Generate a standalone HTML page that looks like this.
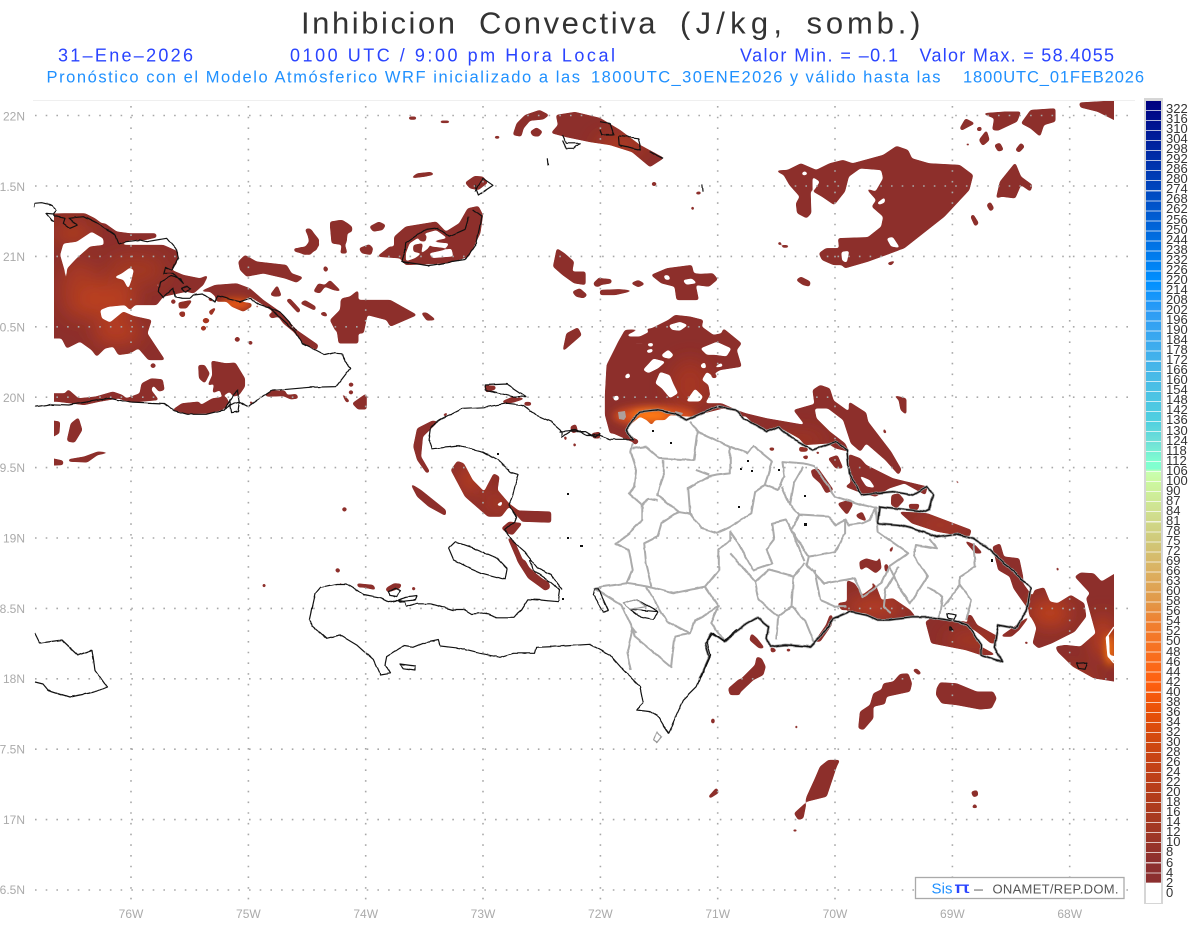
<!DOCTYPE html>
<html lang="es"><head><meta charset="utf-8"><title>Inhibicion Convectiva</title>
<style>
html,body{margin:0;padding:0;background:#fff;width:1200px;height:927px;overflow:hidden}
#w{position:relative;width:1200px;height:927px;overflow:hidden;font-family:"Liberation Sans",sans-serif}
svg{position:absolute;left:0;top:0}
#frame{position:absolute;left:1144px;top:98px;width:19px;height:806px;background:#d6d6d6}
#bar{position:absolute;left:1146px;top:101px;width:15px;height:782px;background:linear-gradient(to bottom,#000080 0%,#0090ff 23.1%,#2e9cf5 26.9%,#48b8e8 34.6%,#50d0e0 41%,#70e0d8 43.6%,#80ffd0 46.2%,#80ffd0 47%,#c8ffb0 47.4%,#ccf8a0 48.7%,#d0e090 52.6%,#d0c878 56.4%,#dcb060 60.3%,#e29848 64.1%,#f08030 66.7%,#f87020 70.5%,#ff6010 74.4%,#e85008 78.2%,#d04810 82%,#c04018 85.9%,#b03c1c 89.7%,#a03825 93.6%,#8c2f2f 97.4%,#8c2f2f 100%)}
#lines{position:absolute;left:1146px;top:101px;width:15px;height:782px;background:repeating-linear-gradient(to bottom,transparent 0,transparent 9px,rgba(255,255,255,.7) 9px,rgba(255,255,255,.7) 10.03px)}
#white{position:absolute;left:1146px;top:883px;width:15px;height:20px;background:#fff}
#labs{position:absolute;left:1166px;top:104px;font-size:13px;line-height:10.05px;color:#333;white-space:nowrap}
</style></head><body><div id="w">
<svg width="1200" height="927" viewBox="0 0 1200 927" xmlns="http://www.w3.org/2000/svg">
<defs>
<clipPath id="box"><rect x="54" y="101" width="1060" height="800"/></clipPath>
<filter id="b" x="-50%" y="-50%" width="200%" height="200%"><feGaussianBlur stdDeviation="9"/></filter>
<filter id="bs" x="-50%" y="-50%" width="200%" height="200%"><feGaussianBlur stdDeviation="4"/></filter>
<filter id="round" filterUnits="userSpaceOnUse" x="0" y="0" width="1200" height="927"><feGaussianBlur stdDeviation="1.3"/><feComponentTransfer><feFuncA type="linear" slope="8" intercept="-3.1"/></feComponentTransfer></filter>
<filter id="wig" filterUnits="userSpaceOnUse" x="0" y="0" width="1200" height="927" color-interpolation-filters="sRGB"><feTurbulence type="fractalNoise" baseFrequency=".09" numOctaves="2" seed="4" result="n"/><feDisplacementMap in="SourceGraphic" in2="n" scale="2.6" xChannelSelector="R" yChannelSelector="G"/><feGaussianBlur stdDeviation=".25"/></filter>
<mask id="m" maskUnits="userSpaceOnUse" x="0" y="0" width="1200" height="927">
<g clip-path="url(#box)">
<g fill="#fff" fill-rule="evenodd" filter="url(#round)">
<g transform="scale(.3827,.3333)">
<path d="M1068,350 1088,350 1088,359 1068,359Z M1150,362 1175,362 1175,369 1150,369Z M1340,405 1350,370 1372,345 1410,330 1435,345 1420,358 1385,362 1368,385 1362,410Z M1385,395 1402,382 1418,395 1408,410 1392,408Z M1292,408 1306,408 1306,416 1292,416Z M1072,535 1090,520 1125,516 1137,523 1110,530Z M1215,548 1240,528 1262,530 1275,548 1250,570 1228,565Z"/>
<path d="M800,685 815,690 835,735 810,765 770,755 768,745 795,745 808,725Z M862,665 895,660 920,680 920,695 895,705 905,760 890,760 895,715 868,710Z M938,745 965,733 975,745 970,765 945,760Z M965,680 990,665 1008,675 1000,690 975,695Z"/>
<path d="M985,770 1018,740 1030,740 1030,710 1060,680 1140,665 1165,695 1200,670 1222,625 1250,618 1262,645 1255,700 1225,770 1170,790 1060,795 1045,775Z M1060,760 1070,730 1110,700 1140,690 1170,715 1125,725 1120,745 1085,775 1060,785Z M1120,760 1180,745 1185,770 1130,775Z M1125,725 1175,730 1165,745 1125,740Z"/>
<path d="M1095,705 1115,705 1112,725 1095,722Z M1080,735 1105,730 1100,760 1080,755Z"/>
<path d="M1445,800 1455,745 1475,760 1500,785 1495,815 1530,815 1530,855 1500,850 1470,825Z M1495,875 1515,865 1535,885 1525,895 1505,890Z M1550,850 1568,830 1568,860 1555,860Z"/>
</g>
<path d="M556,115 575,112 600,118 620,130 640,145 664,158 650,167 632,152 610,145 590,142 566,137 551,133 558,125Z"/>
<g transform="translate(600,0) scale(.3827,.3333)">
<path d="M0,835 30,838 30,850 0,855Z M0,870 50,868 90,872 40,885 0,885Z M80,850 100,840 118,852 100,862Z"/>
<path d="M133,825 175,805 240,795 245,820 262,822 295,820 308,838 285,860 250,855 258,900 200,900 195,860 160,850Z M165,825 180,825 185,840 170,840Z M215,840 240,835 255,850 225,855Z"/>
<path d="M133,552 141,544 150,552 141,560Z M238,620 246,620 246,630 238,630Z M250,576 264,574 264,583 250,583Z M465,726 474,726 474,735 465,735Z M475,735 493,736 493,743 475,743Z"/>
<path d="M458,512 490,510 525,490 565,510 600,490 635,480 660,490 740,465 775,438 805,450 815,475 860,490 940,495 975,525 965,570 900,650 795,745 700,785 640,805 632,795 610,795 580,780 572,760 590,745 625,745 622,715 700,712 735,680 740,650 710,620 722,600 695,565 720,575 740,535 735,510 680,505 650,530 640,575 612,615 580,590 550,570 552,640 540,655 515,640 512,610 522,590 495,555 480,525Z M525,520 535,512 545,522 532,528Z M555,530 575,545 555,580Z M722,610 745,590 745,608 730,615Z M748,715 765,710 785,745 760,740Z M742,658 752,655 750,665Z M630,755 652,752 645,790 632,782Z"/>
<path d="M748,790 775,780 760,797Z M512,840 525,830 550,845 548,860 530,855Z M940,385 955,355 980,370 955,385 945,392Z M985,382 997,380 997,393 985,393Z M998,340 1060,335 1100,335 1090,365 1040,392 1025,390 1030,355Z M1100,370 1125,330 1190,325 1190,365 1160,375 1150,410 1125,385Z M990,420 1010,390 1018,420 1000,438Z M1030,435 1045,428 1055,450 1040,455Z M1085,450 1100,428 1110,440 1095,458Z M1252,308 1370,300 1370,375 1300,335 1255,322Z M1035,595 1045,545 1085,488 1100,530 1130,555 1125,575 1100,555 1085,595 1050,590Z M1010,615 1020,605 1030,625 1020,635Z M968,650 975,642 990,670 980,680Z M956,430 966,430 966,437 956,437Z"/>
</g>
<g transform="translate(30,190) scale(.3333)">
<path d="M39,72 100,70 165,70 195,85 215,100 225,100 260,125 300,130 378,130 380,142 345,150 300,150 270,165 300,165 400,165 445,185 440,220 425,240 460,255 510,265 535,255 520,285 490,310 470,305 445,310 400,320 380,345 315,345 300,360 285,345 235,350 210,360 215,385 240,398 280,365 310,378 365,390 352,430 375,465 405,510 355,510 325,475 300,490 265,495 250,470 225,475 200,500 185,480 150,455 110,475 95,445 39,445Z M90,195 100,160 140,155 185,125 220,145 222,165 180,170 140,205 112,235 108,290 103,240Z M250,262 275,250 300,232 312,240 305,270 295,298 280,270Z M370,195 383,195 383,200 370,200Z M380,280 388,280 386,292 380,290Z"/>
<path d="M430,326 439,335 430,344 421,335Z M450,340 488,330 470,355 445,355Z M455,365 468,378 455,382 445,370Z M535,365 558,350 545,378Z M520,406 529,415 520,424 511,415Z M525,383 534,392 525,401 516,392Z M535,320 552,330 545,335 535,330Z"/>
<path d="M490,310 520,300 555,285 620,280 660,295 700,330 750,365 800,420 865,465 860,480 825,465 790,425 760,400 745,380 725,385 715,375 730,365 700,345 660,320 640,330 610,335 555,318 540,305 510,305Z"/>
<path d="M555,320 590,320 630,335 665,340 665,350 640,365 605,350 590,335 560,335Z M675,345 690,348 680,355Z"/>
<path d="M625,215 645,195 680,215 770,225 785,250 820,262 800,278 765,265 700,250 650,260 630,240Z M720,315 742,285 755,318 735,320Z M768,330 780,325 812,360 805,370Z M810,340 825,330 858,350 855,362Z M868,370 885,365 895,380 880,378Z M622,439 631,448 622,457 613,448Z M660,451 667,458 660,465 653,458Z M885,226 896,237 887,248 879,237Z M850,305 865,280 885,285 900,270 935,305 910,300 885,290 870,310Z M790,180 810,172 830,170 840,150 825,118 840,115 868,150 860,180 825,195Z M900,105 925,90 955,100 950,155 945,165 952,190 930,190 940,165 905,160Z M900,390 930,360 935,325 960,320 985,300 985,460 925,460 930,430 915,420Z"/>
</g>
<g transform="translate(0,300) scale(.3827,.3333)">
<path d="M1020,0 1090,45 1105,110 1040,190 975,165 1010,155 955,100 925,100 885,130 880,90 862,60 890,55 890,0Z M1100,38 1115,38 1140,60 1115,62Z M950,100 960,45 1010,60 1020,80 1090,45 1105,110 1040,190 975,165 1010,155 955,100Z M550,30 565,25 550,48Z M465,8 500,0 490,15 470,25Z M470,35 485,35 480,50Z M620,109 629,118 620,127 611,118Z M655,122 662,128 655,136 648,128Z M532,76 541,84 532,93 523,84Z M540,53 549,62 540,71 531,62Z M400,188 409,197 400,206 391,197Z"/>
<path d="M115,280 170,280 178,268 205,295 250,290 295,275 320,285 330,295 365,280 370,250 395,235 425,238 430,270 415,275 400,255 395,270 415,300 340,308 310,295 260,305 220,315 150,305 115,305Z M518,195 535,195 548,220 535,250 520,235Z M552,182 590,190 615,188 640,235 640,260 625,285 610,290 600,275 580,290 575,270 555,280 560,250 542,258 555,225Z M450,330 475,310 520,305 525,315 555,295 590,290 600,310 580,330 545,340 490,342Z M650,300 665,310 655,315Z M690,285 710,272 745,272 750,285 775,282 780,295 760,298 740,288 700,290Z M115,358 157,365 155,400 115,425Z M175,420 185,370 205,352 215,390 195,428 178,425Z M115,470 165,482 165,495 115,497Z M178,478 220,470 255,455 293,457 255,465 228,487 180,485Z"/>
<path d="M917,246 926,254 917,262 909,254Z M917,269 925,277 917,285 909,277Z M888,272 915,305 905,308Z M920,310 945,290 958,280 958,328 935,328Z M900,620 908,628 900,637 892,628Z M883,804 890,812 883,820 876,812Z M690,849 696,857 690,864 684,857Z M1470,155 1480,100 1510,82 1520,105 1490,135Z M1080,440 1090,385 1130,362 1145,365 1105,410 1100,470 1123,515 1115,520 1090,480Z M1072,550 1100,570 1165,630 1165,648 1120,620 1090,590Z"/>
<path d="M1178,510 1195,483 1212,490 1235,540 1265,575 1290,520 1305,530 1300,570 1330,610 1355,632 1440,635 1440,668 1365,665 1345,640 1330,620 1310,650 1275,650 1215,590Z M1295,615 1315,600 1310,620Z M1310,685 1330,665 1365,670 1340,705 1325,700Z M1325,710 1345,725 1370,790 1405,825 1438,855 1425,872 1380,835 1355,790Z M1265,255 1295,258 1295,268 1270,278Z M1310,305 1340,290 1375,295 1340,308 1320,310Z M1370,306 1388,306 1388,317 1370,317Z M1155,345 1172,335 1165,350Z M1265,328 1272,328 1270,341Z M1472,408 1482,410 1478,427Z M1490,380 1505,372 1510,395 1495,400Z M1498,426 1508,435 1498,443Z M1545,400 1568,395 1568,415 1550,415Z M930,852 975,855 982,870 940,860Z M1012,862 1030,850 1050,852 1045,865 1020,875Z M1078,859 1087,866 1080,873Z"/>
</g>
<g transform="translate(300,560) scale(.3333)">
<path d="M170,70 220,75 228,90 205,82 175,82Z M256,88 265,79 274,90 265,98Z M282,72 305,72 295,82Z M340,79 349,86 340,93 334,86Z M104,30 113,23 121,30 113,39Z M118,63 127,72 120,81Z M650,0 675,0 700,45 745,65 750,85 735,92 710,72 690,55Z M1285,385 1320,355 1320,405 1290,405Z M1234,476 1244,476 1244,490 1234,490Z"/>
</g>
<g transform="translate(590,305) scale(.3333)">
<path d="M45,270 50,180 75,130 85,110 105,75 165,72 185,70 235,45 255,30 300,35 340,45 335,65 370,90 395,85 400,70 455,115 440,135 455,185 390,195 365,210 350,200 335,225 355,240 360,270 345,295 395,295 440,315 480,330 455,335 440,320 400,310 340,325 300,335 240,330 225,345 195,345 185,360 170,345 150,335 125,355 110,375 125,395 135,400 125,410 70,385 60,385 45,330Z M110,90 135,78 165,72 180,80 150,95 115,95Z M130,113 165,113 165,118 130,118Z M170,115 190,113 190,125 175,125Z M168,135 190,130 188,142 172,145Z M235,60 270,50 295,60 270,78 245,75Z M213,150 235,133 252,150 240,162 220,158Z M158,195 190,160 228,170 205,190 175,205Z M105,210 118,202 122,218 105,222Z M195,235 210,200 240,210 250,235 265,265 240,280 215,250Z M287,290 315,250 340,275 330,290Z M330,130 380,110 425,130 410,155 375,150 350,150Z M330,180 345,170 350,190 335,190Z M365,190 395,172 400,185Z M68,275 85,270 88,285 72,288Z"/>
<path d="M138,400 147,410 136,420 126,410Z M365,210 380,208 380,219 365,219Z"/>
</g>
<g transform="translate(560,380) scale(.3827,.3333)">
<path d="M475,97 540,115 640,135 610,90 665,72 660,30 680,15 705,25 715,62 755,95 755,65 800,98 805,125 865,215 892,268 885,285 850,240 800,190 785,215 760,190 740,120 700,85 665,85 670,115 705,155 745,190 755,215 720,205 700,190 640,195 625,175 570,140 540,155 500,125Z"/>
<path d="M755,222 785,235 800,255 870,295 960,320 955,345 900,310 860,325 825,350 790,340 745,320 760,308 755,275Z M780,285 810,300 825,325 800,320Z"/>
<path d="M700,235 725,225 740,265 720,265Z M625,200 650,205 645,215 625,215Z M630,230 650,225 645,240Z M545,203 562,203 558,213 548,211Z M665,215 680,215 675,225Z M655,270 675,265 715,330 695,340 680,310 660,290Z M725,370 760,358 765,375 750,405 735,385Z M772,405 790,395 802,425 780,415Z M866,345 885,340 900,360 880,385 865,375Z M910,372 940,372 935,390 915,390Z M885,395 960,400 1075,450 1070,470 1035,465 985,455 920,430Z M910,430 920,440 915,445Z M1055,480 1085,495 1105,520 1085,520Z M860,510 875,490 865,520Z M782,545 800,535 830,545 835,525 840,565 825,580 800,560 785,572Z M847,555 855,550 860,570 850,578Z M812,610 822,608 820,620Z"/>
<path d="M1130,500 1150,490 1160,530 1200,535 1210,590 1210,610 1235,650 1225,690 1200,650 1185,625 1175,590 1145,570Z M1225,680 1240,630 1265,622 1280,665 1300,670 1335,645 1370,670 1375,710 1345,755 1285,790 1250,805 1235,790 1245,745 1240,730 1225,700Z M1150,770 1230,705 1200,750 1180,770Z"/>
<path d="M1345,590 1360,578 1395,580 1415,605 1480,560 1480,910 1395,895 1340,860 1300,815 1295,800 1320,795 1360,800 1400,760 1375,655 1385,640Z M1480,725 1425,770 1430,832 1480,865Z"/>
<path d="M1435,762 1448,748 1480,748 1480,835 1437,825Z"/>
<path d="M750,600 770,610 790,645 825,615 840,660 870,655 915,690 930,712 830,722 800,700 750,695Z M955,725 970,715 1060,725 1080,760 1100,800 1140,825 1100,825 1060,810 970,790Z M1065,705 1075,705 1090,735 1145,770 1140,790 1125,790 1100,765 1065,735Z M665,785 695,735 705,705 712,705 710,735 680,785Z M500,760 515,775 535,805 520,805 495,780Z M548,800 565,808 555,818Z M590,805 605,808 598,815Z M1210,785 1225,785 1220,795Z M1295,560 1305,565 1300,578Z M1030,292 1045,310 1038,312Z M870,45 905,55 905,105 890,90 885,60Z M845,140 855,160 845,160Z M725,670 750,665 755,690 735,690Z"/>
</g>
<g transform="translate(700,650) scale(.3333)">
<path d="M85,118 120,90 165,45 170,20 185,25 197,50 190,75 160,90 120,128 90,135Z M475,235 480,185 510,165 520,130 545,118 550,100 580,95 600,72 625,70 636,100 630,125 560,140 555,162 520,170 520,205 490,240Z M637,60 650,55 665,70 655,75Z M710,115 720,97 770,100 830,125 880,125 890,145 875,175 840,178 770,165 725,160 708,135Z M282,490 315,460 320,440 345,385 360,350 385,330 420,330 410,350 380,440 320,455 310,505 295,510Z M25,440 50,412 57,428 30,445Z M34,206 43,206 41,220 34,220Z M813,425 832,420 835,437 820,442Z M814,474 824,460 835,474Z M278,538 292,538 292,545 278,545Z M210,0 235,3 215,8Z M255,0 275,0 265,6Z M285,226 293,226 293,236 285,236Z"/>
</g>
</g>
</g>
</mask>
</defs>

<line x1="33" y1="100.5" x2="1135" y2="100.5" stroke="#efefef"/>

<g mask="url(#m)">
<rect x="0" y="90" width="1200" height="830" fill="#8d2f2b"/>
<g filter="url(#b)" fill="#bd411c">
<ellipse cx="107" cy="300" rx="30" ry="18" opacity=".9"/>
<ellipse cx="117" cy="332" rx="24" ry="13" opacity=".85"/>
<ellipse cx="73" cy="233" rx="20" ry="9" opacity=".8"/>
<ellipse cx="80" cy="290" rx="20" ry="30" opacity=".6"/>
<ellipse cx="135" cy="270" rx="30" ry="15" fill="#a33822"/>
<ellipse cx="1050" cy="613" rx="20" ry="14"/>
<ellipse cx="1103" cy="637" rx="10" ry="22"/>
<ellipse cx="1072" cy="680" rx="22" ry="10" fill="#a93b22"/>
<ellipse cx="874" cy="607" rx="28" ry="9" fill="#bc4020"/>
<ellipse cx="940" cy="525" rx="26" ry="6" fill="#b53c20"/>
<ellipse cx="975" cy="640" rx="30" ry="8" fill="#a83822"/>
<ellipse cx="470" cy="480" rx="12" ry="14" fill="#b83e20"/>
<ellipse cx="497" cy="503" rx="14" ry="10" fill="#a83822"/>
<ellipse cx="620" cy="145" rx="24" ry="8" fill="#b83e1e"/>
<ellipse cx="205" cy="322" rx="30" ry="10" fill="#b0391e"/>
<ellipse cx="690" cy="385" rx="20" ry="25" fill="#a53623"/>
<ellipse cx="800" cy="440" rx="26" ry="8" fill="#a03524"/>
</g>
<g filter="url(#bs)">
<ellipse cx="655" cy="416" rx="42" ry="10" fill="#d8501a"/>
<ellipse cx="650" cy="415" rx="18" ry="6" fill="#ff7a14"/>
<ellipse cx="236" cy="304" rx="16" ry="5" fill="#f05c10"/>
<ellipse cx="1110" cy="650" rx="5" ry="16" fill="#f07010"/>
</g>
</g>

<!-- gray patches on orange -->
<g fill="#aaa" opacity=".9"><path d="M618,412 625,411 626,417 624,420 619,419Z M665,411 670,411 672,414 667,414Z M675,411 683,413 682,415 676,414Z"/></g>

<!-- province lines -->
<g filter="url(#wig)">
<g transform="translate(560,380) scale(.3827,.3333)" fill="none" stroke="#ababab" stroke-width="2" stroke-linejoin="round">
<path vector-effect="non-scaling-stroke" d="M190,190 185,215 200,270 195,320 180,340 215,375 215,420 180,460 145,490 180,510 190,570 175,610 110,620 90,625 160,675 190,745 200,760"/>
<path vector-effect="non-scaling-stroke" d="M190,205 225,200 260,235 350,240 360,155 445,200 490,220 505,198 555,245 535,315 570,330 585,290 580,245 635,250 665,258 695,310 720,350 790,375 830,385"/>
<path vector-effect="non-scaling-stroke" d="M360,155 340,125 M270,240 270,290 255,345 310,395 340,400 335,325 390,290 410,285 445,280 445,200 M355,270 390,285 M215,375 230,355 255,360"/>
<path vector-effect="non-scaling-stroke" d="M340,400 370,445 410,460 445,440 500,400 510,335 535,315 M600,375 610,310 635,260 M580,320 600,375 625,405 700,410 720,435 745,420 755,435 790,430 810,420 825,385"/>
<path vector-effect="non-scaling-stroke" d="M625,405 605,450 590,420 555,430 560,480 540,510 555,550 505,570 460,480 445,455 445,480 415,510 415,570 380,620 295,640 230,620 175,610 M310,395 265,430 255,470 220,490 225,550 240,620"/>
<path vector-effect="non-scaling-stroke" d="M605,450 650,530 720,515 745,460 745,420 M605,450 640,545 M650,530 645,555 690,610 770,595 790,650 840,610 860,560 910,520 830,455 825,385"/>
<path vector-effect="non-scaling-stroke" d="M640,550 610,590 545,570 510,605 520,660 570,710 565,780 M610,590 605,680 640,720 665,790 M665,570 680,660 720,680 750,680 M605,680 570,710 M510,605 445,520 M380,620 415,680 355,720 340,760 280,725 225,620 M415,680 395,730 430,785"/>
<path vector-effect="non-scaling-stroke" d="M340,760 300,770 290,860 195,770 190,745 175,820 185,870 M860,560 885,620 915,670 960,590 925,530 930,495 985,505 965,475 M885,560 850,630 845,680 865,700 M960,620 1000,650 990,715 M1000,680 1045,615 1075,660 1060,720 M1045,615 1045,590 1085,560 1080,490"/>
</g>

<!-- coast gray underlay -->
<g fill="none" stroke="#9a9a9a" stroke-width="2.6" stroke-linejoin="round">
<path transform="translate(560,380) scale(.3827,.3333)" vector-effect="non-scaling-stroke" d="M190,178 173,150 190,120 210,95 250,90 300,100 330,120 370,100 410,80 460,90 480,115 540,155 570,140 620,185 660,210 720,185 750,210 755,280 790,345 870,335 920,345 958,320 975,345 965,390 955,395 835,380 830,430 885,435 920,445 985,470 1035,462 1080,475 1125,510 1230,625 1220,690 1190,745 1145,735 1135,800 1155,845 1100,825 1100,795 1065,735 1040,725 970,712 920,712 860,720 830,720 800,705 755,695 715,715 680,770 655,800 590,795 550,800 540,775 545,740 515,712 480,735 430,785 395,760 380,790 390,830 365,895"/>
</g>
<!-- coast black -->
<g fill="none" stroke="#111" stroke-width="1.2" stroke-linejoin="round">
<g transform="scale(.3827,.3333)">
<path vector-effect="non-scaling-stroke" d="M1240,575 1262,535 1288,556 1250,585 1240,555"/>
<path vector-effect="non-scaling-stroke" d="M1060,750 1050,785 1120,797 1215,780 1245,730 1258,650 1235,630 M1225,650 1215,690 1175,710 1145,685 1110,690 1060,730 1058,760"/>
<path vector-effect="non-scaling-stroke" d="M1470,405 1480,430 1515,430 1500,445 1480,445 1470,420 M1430,475 1432,495"/>
</g>
<g transform="translate(600,0) scale(.3827,.3333)">
<path vector-effect="non-scaling-stroke" d="M0,365 25,370 35,405 5,405 0,390 M50,408 100,415 108,450 50,435 48,408 M130,455 165,475 M266,552 268,575"/>
</g>
<g transform="translate(0,300) scale(.3827,.3333)">
<path vector-effect="non-scaling-stroke" d="M92,320 135,313 180,315 230,305 285,295 345,308 430,312 455,332 490,343 540,343 585,330 610,310 625,305 650,320 680,295 710,272 750,268 810,262 878,260 895,235 915,205 900,185 895,160 875,158 850,165 825,150 790,130 770,92 730,50 700,20"/>
<path vector-effect="non-scaling-stroke" d="M585,330 600,305 620,270 625,305 622,335 605,338 600,300"/>
<path vector-effect="non-scaling-stroke" d="M1268,255 1325,252 1375,290 1340,290 1290,275 1268,270Z"/>
<path vector-effect="non-scaling-stroke" d="M1172,745 1190,725 1240,745 1300,775 1325,805 1320,838 1260,820 1220,800 1185,780 1172,745"/>
<path vector-effect="non-scaling-stroke" d="M1470,870 1440,825 1405,805 1370,755 1340,725 1320,690 1345,665 1350,650 1330,615 1340,585 1345,560 1355,525 1335,518 1300,480 1260,455 1225,445 1195,437 1130,445 1120,420 1125,380 1150,360 1210,325 1265,322 1325,310 1365,315 1400,345 1440,365 1470,395 1470,410 1490,395 1530,395 1555,412 1568,400"/>
</g>
<g transform="translate(30,190) scale(.3333)">
<path vector-effect="non-scaling-stroke" d="M800,420 750,365 720,355 690,345 660,325 630,335 600,328 590,325 565,318 555,335 520,312 490,315 480,325 455,325 435,320 430,295 400,322 385,305 390,275 425,258 450,265 460,280 430,250 400,250 405,232 425,240 445,205 440,180 410,145 350,155 330,150 290,155 265,162 255,135 225,115 200,100 160,80 140,82 118,85 135,100 143,105 120,115 100,100 105,85 75,78 70,72 80,60 65,45 35,38 15,40 13,52 M70,72 48,70 65,90 72,95"/>
<path vector-effect="non-scaling-stroke" d="M455,295 470,288 482,298 465,305Z"/>
</g>
<g transform="translate(300,560) scale(.3333)">
<path vector-effect="non-scaling-stroke" d="M28,178 45,100 60,82 110,72 140,72 170,90 190,105 245,115 265,125 290,120 315,125 320,140 350,130 390,130 420,138 460,150 495,150 515,162 555,158 590,172 640,172 665,150 685,118 720,120 775,125 780,90 750,65 700,30 690,0"/>
<path vector-effect="non-scaling-stroke" d="M28,178 40,200 80,235 120,225 170,255 220,300 240,345 270,340 255,315 260,290 310,258 340,262 370,250 415,240 420,258 480,265 540,280 600,292 640,280 705,280 710,262 760,260 870,253 930,285 970,330 1020,380 1030,430 1010,450 1050,455 1075,470 1105,520 1150,420 1190,380 1232,285 1220,240 1240,220 1270,245 1310,208"/>
<path vector-effect="non-scaling-stroke" d="M300,312 345,318 345,330 310,325Z M265,95 285,85 303,92 290,108 270,105Z M295,120 320,112 350,108 345,120 300,125Z M885,85 895,85 925,150 910,155 880,105Z M990,148 1075,155 1060,178 1020,170Z M1010,118 1075,155"/>
<path stroke="#999" vector-effect="non-scaling-stroke" d="M1060,540 1072,515 1085,530 1070,548Z M970,130 1010,118 1040,140 990,148Z"/>
</g>
<g transform="translate(560,380) scale(.3827,.3333)">
<path vector-effect="non-scaling-stroke" d="M0,155 40,150 70,165 100,165 130,178 192,178"/>
<path vector-effect="non-scaling-stroke" d="M190,178 173,150 190,120 210,95 250,90 300,100 330,120 370,100 410,80 460,90 480,115 540,155 570,140 620,185 660,210 720,185 750,210 755,280 790,345 870,335 920,345 958,320 975,345 965,390 955,395 835,380 830,430 885,435 920,445 985,470 1035,462 1080,475 1125,510 1230,625 1220,690 1190,745 1145,735 1135,800 1155,845 1100,825 1100,795 1065,735 1040,725 970,712 920,712 860,720 830,720 800,705 755,695 715,715 680,770 655,800 590,795 550,800 540,775 545,740 515,712 480,735 430,785 395,760 380,790 390,830 365,895"/>
<path vector-effect="non-scaling-stroke" d="M1350,850 1378,848 1372,868 1355,865Z M1012,700 1035,705 1030,718 1015,715Z M1020,740 1028,750 1020,750Z"/>
</g>
<path vector-effect="non-scaling-stroke" d="M35,633 40,643 62,640 78,655 92,650 95,670 107,687 95,692 70,697 48,690 43,684 35,682"/>
</g>
</g>
<path fill="none" stroke="#fff" stroke-width="1.4" d="M1114,627 1107,637 1109,657 1114,663"/>
<!-- tiny black dots -->
<g fill="#111"><rect x="652" y="430" width="2" height="2"/><rect x="670" y="442" width="2" height="2"/><rect x="747" y="460" width="2" height="2"/><rect x="740" y="468" width="2" height="2"/><rect x="751" y="470" width="2" height="2"/><rect x="778" y="469" width="2" height="2"/><rect x="804" y="495" width="2" height="2"/><rect x="738" y="506" width="2" height="2"/><rect x="567" y="493" width="2" height="2"/><rect x="580" y="545" width="3" height="2"/><rect x="804" y="523" width="3" height="3"/><rect x="991" y="559" width="2" height="3"/><rect x="562" y="598" width="2" height="2"/><rect x="497" y="453" width="2" height="2"/><rect x="567" y="537" width="2" height="2"/></g>

<!-- grid -->
<g stroke="#a8a8a8" stroke-width="1.6" stroke-dasharray="1.6 9.1" fill="none">
<path d="M35,115.5H1136M35,186H1136M35,256.4H1136M35,326.8H1136M35,397.2H1136M35,467.6H1136M35,538H1136M35,608.4H1136M35,678.8H1136M35,749.2H1136M35,819.6H1136M35,890H1136"/>
<path d="M131,106V907M248.4,106V907M365.7,106V907M483,106V907M600.4,106V907M717.7,106V907M835,106V907M952.4,106V907M1069.7,106V907"/>
</g>

<!-- axis labels -->
<g fill="#aaa" font-family="'Liberation Sans',sans-serif" font-size="12" text-anchor="end">
<text x="25" y="120.5">22N</text><text x="25" y="191">1.5N</text><text x="25" y="261">21N</text><text x="25" y="331.5">0.5N</text><text x="25" y="402">20N</text><text x="25" y="472">9.5N</text><text x="25" y="542.5">19N</text><text x="25" y="613">8.5N</text><text x="25" y="683">18N</text><text x="25" y="753.5">7.5N</text><text x="25" y="824">17N</text><text x="25" y="894">6.5N</text>
</g>
<g fill="#aaa" font-family="'Liberation Sans',sans-serif" font-size="12" text-anchor="middle">
<text x="131" y="918">76W</text><text x="248.4" y="918">75W</text><text x="365.7" y="918">74W</text><text x="483" y="918">73W</text><text x="600.4" y="918">72W</text><text x="717.7" y="918">71W</text><text x="835" y="918">70W</text><text x="952.4" y="918">69W</text><text x="1069.7" y="918">68W</text>
</g>

<!-- titles -->
<g font-family="'Liberation Sans',sans-serif">
<g fill="#333" font-size="31">
<text x="301" y="33.5" textLength="154">Inhibicion</text>
<text x="479" y="33.5" textLength="176.5">Convectiva</text>
<text x="680" y="33.5" textLength="102">(J/kg,</text>
<text x="806.5" y="33.5" textLength="114">somb.)</text>
</g>
<g fill="#2a44ff" font-size="18">
<text x="58" y="61.5" textLength="135">31–Ene–2026</text>
<text x="290" y="61.5" textLength="325">0100 UTC / 9:00 pm Hora Local</text>
<text x="740" y="61.5" textLength="158">Valor Min. = –0.1</text>
<text x="919.5" y="61.5" textLength="194.5">Valor Max. = 58.4055</text>
</g>
<g fill="#1f90ff" font-size="16.5">
<text x="46.5" y="82.5" textLength="533.5">Pronóstico con el Modelo Atmósferico WRF inicializado a las</text>
<text x="591" y="82.5" textLength="349.5">1800UTC_30ENE2026 y válido hasta las</text>
<text x="963" y="82.5" textLength="181">1800UTC_01FEB2026</text>
</g>
</g>

<!-- credit box -->
<rect x="915.5" y="877.5" width="208.5" height="21" fill="#fff" stroke="#aaa" stroke-width="1.3"/>
<g font-family="'Liberation Sans',sans-serif" font-size="14">
<text x="931.5" y="893.5" fill="#1f90ff" textLength="21" font-size="15">Sis</text>
<text x="954" y="893" fill="#2a44ff" font-size="15" textLength="16" lengthAdjust="spacingAndGlyphs" font-family="'DejaVu Sans',sans-serif">π</text>
<text x="974" y="893.5" fill="#555" textLength="9" lengthAdjust="spacingAndGlyphs">–</text>
<text x="992.5" y="893.5" fill="#555" font-size="13" textLength="126">ONAMET/REP.DOM.</text>
</g>
</svg>

<div id="frame"></div>
<div id="bar"></div>
<div id="lines"></div>
<div id="white"></div>
<div id="labs">322<br>316<br>310<br>304<br>298<br>292<br>286<br>280<br>274<br>268<br>262<br>256<br>250<br>244<br>238<br>232<br>226<br>220<br>214<br>208<br>202<br>196<br>190<br>184<br>178<br>172<br>166<br>160<br>154<br>148<br>142<br>136<br>130<br>124<br>118<br>112<br>106<br>100<br>90<br>87<br>84<br>81<br>78<br>75<br>72<br>69<br>66<br>63<br>60<br>58<br>56<br>54<br>52<br>50<br>48<br>46<br>44<br>42<br>40<br>38<br>36<br>34<br>32<br>30<br>28<br>26<br>24<br>22<br>20<br>18<br>16<br>14<br>12<br>10<br>8<br>6<br>4<br>2<br>0</div>
</div></body></html>
